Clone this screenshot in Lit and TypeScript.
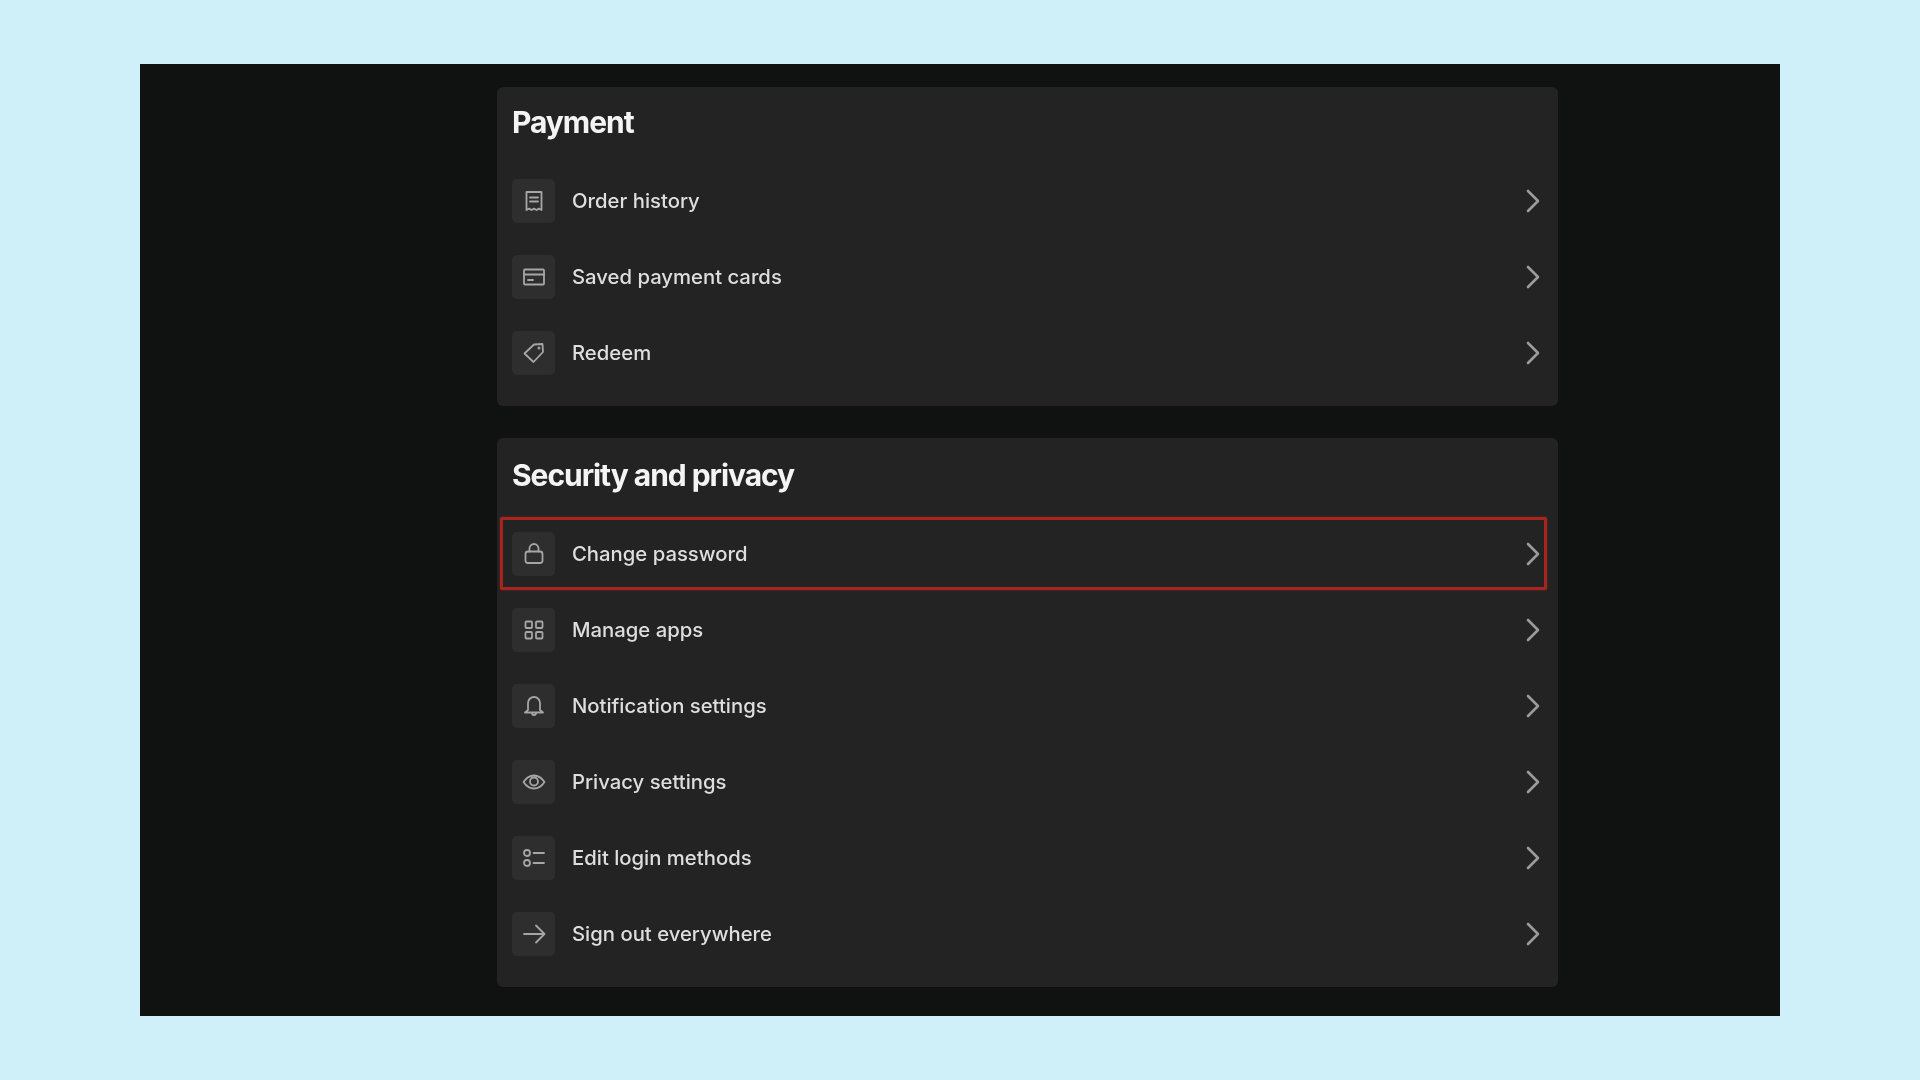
import { LitElement, html, css, svg } from "lit";
import { customElement } from "lit/decorators.js";

const icons: Record<string, unknown> = {
  receipt: svg`<path d="M4.500 3h15v18l-2.500-1.400-2.500 1.400-2.500-1.400-2.500 1.400-2.500-1.400-2.500 1.400z"/><path d="M8 8.500h8M8 12.500h8"/>`,
  card: svg`<rect x="2" y="4.500" width="20" height="15" rx="1"/><path d="M2 9.500h20M6 15h5"/>`,
  tag: svg`<path d="M2.500 12.500 12 3.500l8.500-.5.500 8-9.500 10z"/><circle cx="17" cy="7" r=".6"/>`,
  lock: svg`<rect x="3.500" y="9.500" width="17" height="11.500" rx="2.500"/><path d="M7.500 9.500V6.500a4.500 4.500 0 0 1 9 0v3"/>`,
  apps: svg`<rect x="3.500" y="3.500" width="6.500" height="6.500" rx="1"/><rect x="14" y="3.500" width="6.500" height="6.500" rx="1"/><rect x="3.500" y="14" width="6.500" height="6.500" rx="1"/><rect x="14" y="14" width="6.500" height="6.500" rx="1"/>`,
  bell: svg`<path d="M6 16V9a6 6 0 0 1 12 0v7l3 2.500H3z"/><path d="M10 19a2 2 0 0 0 4 0"/>`,
  eye: svg`<path d="M1.500 12C4.500 7.500 8 5.500 12 5.500s7.500 2 10.500 6.500c-3 4.500-6.500 6.500-10.500 6.500S4.500 16.500 1.500 12z"/><circle cx="12" cy="11.500" r="4"/>`,
  list: svg`<circle cx="5" cy="7" r="3"/><circle cx="5" cy="17" r="3"/><path d="M11.500 7h10.500M11.500 17h10.500"/>`,
  arrow: svg`<path d="M2 12h20M14 3.500l8.500 8.500-8.500 8.500"/>`,
};

const sections = [
  {
    title: "Payment",
    cls: "a",
    rows: [
      ["receipt", "Order history"],
      ["card", "Saved payment cards"],
      ["tag", "Redeem"],
    ],
  },
  {
    title: "Security and privacy",
    cls: "b",
    rows: [
      ["lock", "Change password", true],
      ["apps", "Manage apps"],
      ["bell", "Notification settings"],
      ["eye", "Privacy settings"],
      ["list", "Edit login methods"],
      ["arrow", "Sign out everywhere"],
    ],
  },
];

@customElement("app-root")
export class AppRoot extends LitElement {
  static styles = css`
    :host {
      display: block;
      height: 1080px;
      background: #cff0f8;
      font-family: "Inter", "Liberation Sans", sans-serif;
      overflow: hidden;
    }
    .page {
      padding: 64px 140px;
    }
    .frame {
      height: 952px;
      box-sizing: border-box;
      background: #101111;
      padding: 23px 0 0 357px;
      display: flex;
      flex-direction: column;
      gap: 32px;
    }
    .card {
      width: 1061px;
      box-sizing: border-box;
      background: #232323;
      border-radius: 6px;
      padding: 0 15px 15px 15px;
      filter: blur(0.55px);
    }
    .title {
      margin: 0;
      color: #f4f4f4;
      font-size: 30px;
      font-weight: 700;
      letter-spacing: -1.05px;
      display: flex;
      align-items: center;
      box-sizing: border-box;
    }
    .a .title {
      height: 76px;
      padding-bottom: 6px;
    }
    .b .title {
      height: 78px;
      padding-bottom: 4px;
    }
    .row {
      position: relative;
      height: 76px;
      display: flex;
      align-items: center;
      gap: 17px;
    }
    .box {
      width: 43px;
      height: 44px;
      border-radius: 5px;
      background: #2e2e2e;
      display: flex;
      align-items: center;
      justify-content: center;
      flex: none;
    }
    .box svg {
      width: 24px;
      height: 24px;
      fill: none;
      stroke: #a6a6a6;
      stroke-width: 1.8;
      stroke-linejoin: round;
      stroke-linecap: round;
    }
    .label {
      flex: 1;
      color: #dedede;
      font-size: 20.3px;
      font-weight: 500;
      padding-bottom: 2px;
    }
    .chev {
      width: 16px;
      height: 26px;
      margin-right: 2px;
      fill: none;
      stroke: #9c9c9c;
      stroke-width: 2.6;
      stroke-linejoin: round;
      stroke-linecap: round;
    }
    .hl {
      position: absolute;
      left: -12px;
      right: -4px;
      top: 1px;
      bottom: 2px;
      border: 3px solid #a8251f;
      border-radius: 2px;
      box-shadow: 0 0 2px rgba(190, 50, 40, 0.6);
      pointer-events: none;
    }
  `;

  render() {
    return html`<div class="page">
      <div class="frame">
        ${sections.map(
          (s) => html`<section class="card ${s.cls}">
            <h2 class="title">${s.title}</h2>
            ${s.rows.map(
              (r) => html`<div class="row">
                <div class="box">
                  <svg viewBox="0 0 24 24">${icons[r[0] as string]}</svg>
                </div>
                <div class="label">${r[1]}</div>
                <svg class="chev" viewBox="0 0 16 26"><path d="M3 3l10 10-10 10" /></svg>
                ${r[2] ? html`<div class="hl"></div>` : null}
              </div>`
            )}
          </section>`
        )}
      </div>
    </div>`;
  }
}
